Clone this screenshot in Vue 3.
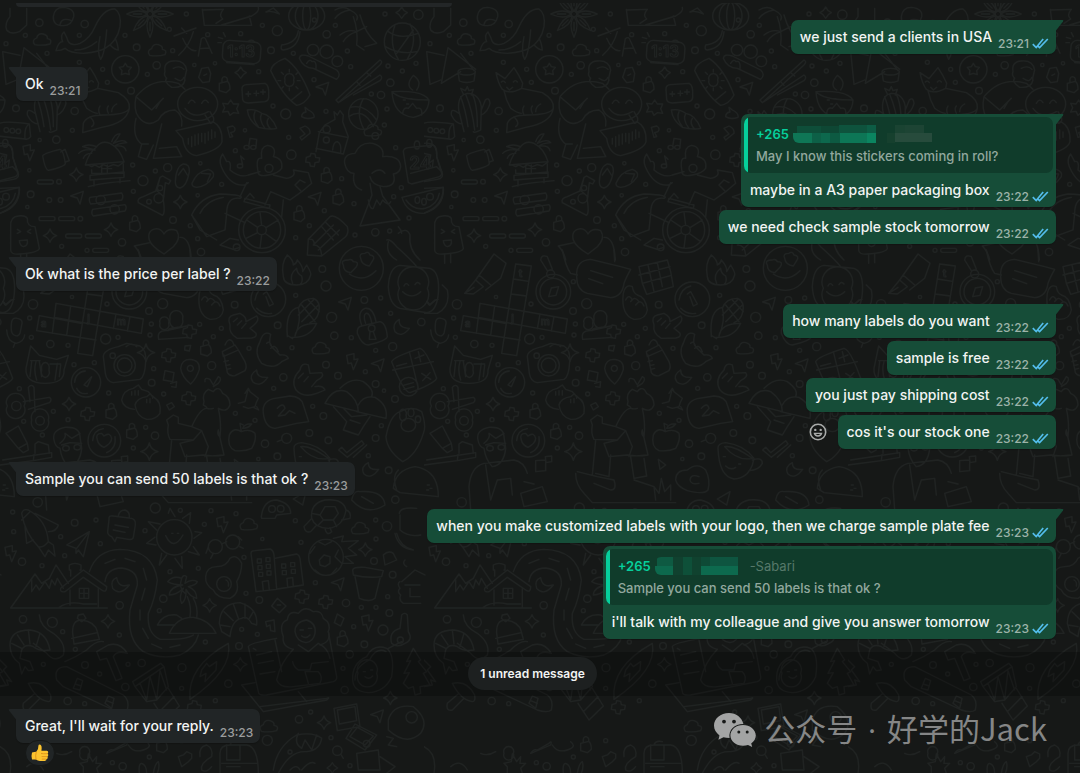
<script setup>
const groups = [
  {
    side: 'out',
    messages: [{ text: 'we just send a clients in USA', time: '23:21' }]
  },
  { side: 'in', messages: [{ text: 'Ok', time: '23:21' }] },
  {
    side: 'out',
    messages: [
      {
        text: 'maybe in a A3 paper packaging box',
        time: '23:22',
        quote: { phone: '+265', text: 'May I know this stickers coming in roll?' }
      },
      { text: 'we need check sample stock tomorrow', time: '23:22' }
    ]
  },
  { side: 'in', messages: [{ text: 'Ok what is the price per label ?', time: '23:22' }] },
  {
    side: 'out',
    messages: [
      { text: 'how many labels do you want', time: '23:22' },
      { text: 'sample is free', time: '23:22' },
      { text: 'you just pay shipping cost', time: '23:22' },
      { text: "cos it's our stock one", time: '23:22', hovered: true }
    ]
  },
  { side: 'in', messages: [{ text: 'Sample you can send 50 labels is that ok ?', time: '23:23' }] },
  {
    side: 'out',
    messages: [
      {
        text: 'when you make customized labels with your logo, then we charge sample plate fee',
        time: '23:23'
      },
      {
        text: "i'll talk with my colleague and give you answer tomorrow",
        time: '23:23',
        quote: { phone: '+265', name: '-Sabari', text: 'Sample you can send 50 labels is that ok ?' }
      }
    ]
  },
  { divider: '1 unread message' },
  { side: 'in', messages: [{ text: "Great, I'll wait for your reply.", time: '23:23', reaction: true }] }
]

// Censor mosaics: x, y, width, height, fill
const mosaicPhone = [
  [0, 8, 19, 10, '#0f7656'], [19, 8, 9, 10, '#0d6047'], [28, 8, 9, 10, '#0d684d'],
  [37, 8, 10, 10, '#0d5a42'], [47, 8, 27, 10, '#0d7656'], [74, 8, 9, 10, '#0b8560'],
  [4, 1, 24, 7, '#0e4e39'], [28, 1, 18, 7, '#0e4734'], [46, 0, 28, 8, '#0e533d'], [74, 0, 9, 8, '#0d5d45']
]
const mosaicName = [
  [94, 8, 8, 10, '#16402e'], [102, 8, 37, 9, '#274b3c'], [102, 0, 10, 8, '#1a4332'], [112, 0, 19, 8, '#1d4434']
]
const mosaicPhoneB = [
  [2, 0, 16, 9, '#0e5a42'], [0, 9, 18, 9, '#0d694d'], [18, 0, 10, 18, '#10412f'], [28, 0, 9, 18, '#0e5039'],
  [37, 0, 9, 18, '#10422f'], [46, 0, 9, 9, '#0e4a36'], [46, 9, 37, 9, '#0d6a4e'], [55, 0, 28, 9, '#0e5540']
]

// Wallpaper doodles, in units of a third of a pixel
const dots = [
  [118, 68, 11], [254, 72, 11], [76, 106, 6], [238, 106, 6], [18, 131, 6], [141, 160, 6], [375, 106, 6], [410, 142, 10],
  [518, 152, 6], [559, 42, 6], [508, 88, 6], [238, 187, 6], [308, 208, 6], [322, 247, 6], [393, 272, 10], [442, 223, 6],
  [470, 196, 11], [583, 195, 5], [645, 190, 5], [623, 104, 6], [722, 101, 6], [787, 76, 6], [832, 92, 15], [813, 151, 10],
  [880, 160, 6], [776, 215, 6], [819, 318, 6], [857, 342, 15], [942, 239, 6], [980, 103, 11], [1006, 76, 6], [943, 60, 6],
  [1042, 153, 6], [1052, 200, 6], [978, 334, 6], [980, 388, 11], [48, 325, 10], [224, 333, 11], [217, 391, 6], [169, 419, 11],
  [119, 420, 5], [88, 511, 5], [92, 583, 10], [82, 621, 5], [398, 495, 6], [503, 503, 12], [466, 513, 6], [601, 490, 5],
  [429, 542, 15], [400, 574, 6], [519, 660, 10], [571, 677, 6], [593, 716, 6], [603, 756, 11], [665, 553, 6], [593, 586, 5],
  [706, 452, 6], [735, 391, 5], [866, 412, 6], [874, 464, 14], [928, 677, 6], [887, 713, 6], [973, 632, 6], [1065, 705, 6],
  [1025, 536, 6], [1062, 611, 6], [185, 739, 6], [366, 727, 11], [261, 751, 6], [1155, 42, 6], [1255, 44, 14], [1164, 198, 6],
  [1207, 213, 6], [1171, 248, 11], [1114, 282, 6], [1143, 285, 11], [1161, 327, 6], [1153, 375, 6], [1126, 408, 10],
  [1187, 443, 6], [1204, 563, 6], [1181, 590, 6], [1227, 654, 6], [1126, 697, 11], [1169, 693, 6], [1248, 190, 6],
  [148, 600, 7], [182, 600, 7], [177, 545, 7], [241, 656, 7], [448, 845, 6], [99, 913, 14], [216, 891, 5], [321, 912, 6],
  [488, 911, 15], [447, 933, 10], [89, 954, 6], [454, 972, 6], [450, 1005, 6], [94, 1012, 6], [151, 1032, 11], [204, 1036, 6],
  [317, 1017, 15], [354, 1012, 6], [599, 973, 6], [664, 985, 6], [640, 1010, 6], [704, 914, 10], [747, 1045, 6], [635, 1097, 12],
  [833, 976, 10], [876, 1043, 6], [887, 886, 6], [967, 807, 10], [978, 858, 15], [995, 952, 15], [1003, 1007, 11], [1054, 1013, 6],
  [1093, 900, 10], [1142, 894, 6], [1172, 940, 6], [1264, 966, 11], [1127, 1051, 6], [1178, 1040, 12], [978, 1094, 10],
  [1014, 1127, 10], [1096, 1115, 6], [1127, 1152, 10], [1152, 1172, 5], [1185, 1197, 10], [222, 1094, 6], [283, 1088, 6],
  [461, 1106, 6], [455, 1148, 10], [58, 1166, 6], [326, 1179, 6], [491, 1182, 6], [160, 1234, 6], [71, 1264, 6], [204, 1259, 6],
  [127, 1305, 6], [437, 1282, 6], [465, 1307, 11], [400, 1344, 6], [821, 1165, 6], [850, 1132, 11], [706, 1240, 6], [765, 1261, 6],
  [938, 1219, 6], [970, 1248, 10], [928, 1299, 10], [985, 1321, 10], [795, 1331, 11], [832, 1369, 10], [775, 1377, 5],
  [1127, 1314, 10], [1105, 1367, 6], [1144, 1277, 6], [1166, 1411, 10], [1186, 1499, 11], [113, 1507, 14], [38, 1536, 6],
  [466, 1524, 15], [541, 1531, 6], [633, 1532, 6], [708, 1541, 6], [613, 1573, 6], [224, 1568, 10], [288, 1560, 6], [41, 1595, 6],
  [182, 1610, 6], [301, 1631, 6], [435, 1592, 6], [194, 1667, 6], [66, 1685, 11], [126, 1697, 6], [510, 1715, 6], [595, 1705, 6],
  [732, 1672, 6], [787, 1617, 5], [903, 1627, 6], [886, 1562, 6], [1127, 1560, 6], [1161, 1579, 14], [1128, 1617, 6],
  [1122, 1683, 10], [1178, 1724, 10], [946, 1748, 6], [738, 1780, 6], [778, 1800, 10], [490, 1796, 11], [478, 1832, 6],
  [359, 1816, 11], [358, 1905, 6], [69, 1858, 11], [157, 1867, 15], [188, 1895, 6], [725, 1888, 6], [772, 1903, 6], [616, 1926, 6],
  [717, 1938, 10], [1038, 1809, 11], [1084, 1822, 6], [1128, 1822, 6], [1168, 1839, 10], [1163, 1790, 6], [1061, 1880, 6],
  [1149, 1890, 15], [1093, 1933, 10], [1049, 1963, 11], [226, 1948, 6], [130, 1993, 6], [255, 1995, 10], [299, 2022, 6],
  [384, 1993, 6], [425, 1989, 11], [546, 2003, 12], [376, 2061, 11], [203, 2103, 11], [254, 2111, 6], [545, 2065, 6],
  [685, 2051, 11], [646, 2102, 6], [1029, 2005, 6], [1034, 2070, 11], [932, 2136, 6], [897, 2158, 11], [993, 2213, 6],
  [802, 2221, 15], [870, 2256, 6], [1050, 2297, 6], [1100, 2231, 10], [368, 2299, 11], [448, 2271, 6], [337, 2288, 6], [545, 2222, 6]
]
const sparkles = [
  [1205, 38, 17], [722, 218, 17], [229, 524, 20], [541, 606, 20], [150, 707, 20], [333, 689, 20], [438, 1058, 26],
  [207, 1212, 20], [448, 1355, 26], [1096, 1649, 20], [629, 1816, 20], [324, 1864, 20], [721, 1993, 20], [972, 2168, 20],
  [1171, 2094, 20], [997, 2304, 16]
]
const clouds = [[126, 120], [471, 152], [1118, 392], [962, 1046], [746, 1574], [1080, 1586], [806, 2180]]
const bolts = [[84, 457], [1055, 1084], [665, 1573], [30, 1660], [1100, 1868]]
const arrows = [[232, 592], [968, 265], [945, 595], [1036, 910], [1134, 1095], [1014, 1752], [1132, 2148]]
const crosses = [[937, 480], [505, 1066], [262, 1242], [976, 1806], [568, 995], [565, 1195], [905, 1790], [582, 2122]]
const locks = [[672, 258], [978, 530], [1013, 595], [616, 1048], [332, 1238], [394, 1298], [1026, 1920], [403, 675], [896, 645], [484, 2238]]
const dashes = [[112, 540, 48], [117, 650, 48], [176, 650, 48], [197, 702, 48], [256, 702, 48], [278, 745, 48]]

const doodles = [
  // sock, bun, whale
  'M30 25V50Q13 70 20 90Q33 105 58 95L80 75V25M160 50Q163 22 190 22Q225 25 221 50Q215 77 190 77Q158 77 160 50M180 74Q185 50 215 62',
  'M168 152Q175 125 188 125Q180 105 192 96Q200 110 205 125Q215 140 240 130Q270 115 285 80Q310 25 345 27Q365 40 360 80Q352 125 315 145Q300 155 250 160Q210 160 195 145Q185 152 168 152M300 110Q290 160 302 178Q315 160 320 90M330 135Q345 150 355 150Q352 125 345 115M225 150Q260 150 290 125',
  // boxes, characters, balls
  'M607 28L613 76H755L748 48M648 70L668 57Q655 45 670 28L607 30M665 75L755 48Q780 35 775 22',
  'M522 108L588 84M545 84L560 100M536 166Q570 135 580 95M548 115Q565 155 588 152M595 168L604 116Q614 108 618 120L636 160M600 146L628 144',
  'M798 36L820 24L838 42Q815 30 798 36M655 112L668 116M670 98L676 110M654 128H664',
  'M866 48a54 42 0 1 0 108 0a54 42 0 1 0 -108 0M886 48a34 42 0 1 0 68 0a34 42 0 1 0 -68 0M908 48a12 42 0 1 0 24 0a12 42 0 1 0 -24 0M895 92Q890 130 845 135Q840 150 850 150Q895 145 900 95',
  // tent, cup, cactus
  'M8 155L60 166M8 155L18 253L50 240M72 143L52 250L110 215M72 143L155 208M110 160L150 212M102 215a26 10 0 1 0 52 0a26 10 0 1 0 -52 0M102 215L106 243Q128 252 150 243L154 215',
  'M120 395L104 330Q100 285 130 280Q165 280 172 320L170 390Q150 400 148 395M110 290Q125 330 132 380M125 283Q145 330 152 390M145 283Q160 310 160 380M118 282L110 265L124 272L130 260L135 272L148 268L142 285M104 340Q80 320 82 345Q95 372 115 372M172 330L184 300Q196 290 198 310Q192 335 172 345',
  // fox
  'M216 218L243 236L270 203Q285 225 296 250L293 265L355 278Q392 300 388 325Q380 345 310 345Q260 345 250 370L248 398L305 382Q380 370 388 325M216 218Q222 250 235 268Q255 285 293 265M240 272L248 300L260 325Q280 340 292 340M232 246Q238 240 244 248M268 246Q274 238 280 246M248 262L256 270L266 262M300 345Q292 330 300 318M325 340Q318 325 325 318M335 335Q335 320 350 312M270 350Q290 370 275 380',
  // hugging figure, smiley, voice bubble
  'M408 290Q460 228 535 250L555 268M408 290L455 330L490 295M408 290Q400 330 415 350Q440 385 475 360Q490 330 525 330Q550 345 545 378M408 355Q395 410 425 432H445M425 433L415 470L440 478L460 435M485 372L460 475L545 470L530 440L478 445M495 215Q490 185 520 183Q555 180 560 210Q552 240 555 240Q550 265 515 262Q490 245 500 235Q490 225 495 215M520 205Q540 195 552 208M525 235Q545 250 552 232M468 325L480 305',
  'M533 312a60 50 0 1 0 120 0a60 50 0 1 0 -120 0M565 310Q575 292 585 308M605 310Q615 292 625 308M555 325Q580 360 625 335M615 345L632 370Q645 365 640 352L630 335',
  'M528 392L640 366Q668 380 666 425Q660 450 590 467Q555 462 548 415L528 392M565 415V432M575 410V440M585 405V436M595 402V432M605 400V425M615 400V430M625 396V420M635 390V416M645 396V412',
  // tag, password, star blob, shell, surfboard
  'M605 205L625 202L632 220L628 245L608 248L596 232ZM612 226L620 222',
  'M726 268Q725 255 740 254L795 250Q808 255 806 285Q808 302 795 305L745 309Q730 308 728 298ZM738 282H752M745 275V289M762 280H776M769 273V287M782 276H796M789 269V283',
  'M668 310L684 312L692 300L700 312L716 312L710 326L716 340L700 338L690 346L684 334L668 336L674 323Z',
  'M742 330Q765 325 785 340Q815 345 830 385Q810 390 775 382Q745 360 742 330M765 335Q755 355 775 380M785 340Q775 360 795 385M805 355Q795 370 812 387',
  'M812 212Q815 190 855 175Q900 205 930 285Q915 312 890 316Q850 290 812 212M855 240a14 14 0 1 0 26 0a14 14 0 1 0 -26 0M868 216V208M868 272V264M842 242H834M900 242H892M850 223L844 217M888 223L894 217M850 260L844 266M888 260L894 266M875 300L905 275',
  // crowd, chopsticks
  'M922 150a17 17 0 1 0 34 0a17 17 0 1 0 -34 0M960 155a20 20 0 1 0 40 0a20 20 0 1 0 -40 0M996 184a16 16 0 1 0 32 0a16 16 0 1 0 -32 0M898 175Q900 160 925 168L1010 210Q1025 225 1010 238L940 205Q910 205 898 175M920 190Q930 175 936 185Q950 180 948 205',
  'M1008 300L1140 180Q1150 185 1140 195L1015 308ZM1020 305L1140 225Q1150 232 1140 242L1060 285M1100 218L1112 228M1070 245L1080 256',
  // palm, globe
  'M1005 30Q1030 15 1050 30Q1020 35 1005 55M1050 30Q1080 45 1070 60M1060 50Q1075 90 1070 135L1092 150M1080 45Q1095 100 1130 130L1095 140M1020 105Q1045 85 1070 95Q1040 105 1030 125M1070 95L1100 80',
  'M1153 125a54 56 0 1 0 108 0a54 56 0 1 0 -108 0M1165 95Q1200 120 1255 100M1156 140Q1200 165 1250 155M1185 75Q1165 130 1195 178M1230 72Q1255 120 1222 178M1190 160L1240 90',
  // lamp, basketball, casserole
  'M1176 275Q1180 345 1240 352Q1285 345 1287 300Q1270 270 1176 275M1176 275Q1200 300 1285 300M1238 270Q1215 255 1240 226Q1268 245 1250 270M1208 340Q1210 320 1225 325L1238 310L1250 325Q1268 320 1265 345M1210 300H1216M1230 296H1236M1220 312H1226',
  'M1046 342a44 46 0 1 0 88 0a44 46 0 1 0 -88 0M1050 322Q1095 310 1130 360M1046 350Q1090 320 1120 380M1090 296Q1065 340 1092 388',
  'M-8 375Q0 360 88 372L92 410Q85 420 75 417L-8 408ZM88 372Q72 380 75 417M12 390a7 7 0 1 0 14 0a7 7 0 1 0 -14 0M30 392a7 7 0 1 0 14 0a7 7 0 1 0 -14 0M48 394a7 7 0 1 0 14 0a7 7 0 1 0 -14 0M915 322L925 330Q945 340 942 352Q920 360 905 350Q905 338 918 336Z',
  // castle, P, heart notes
  'M948 455L958 398L975 375L1005 358L1002 335L1012 345L1020 332L1030 345L1028 365L1045 410L1030 462L948 445M955 395L1042 412M998 450Q1000 425 1012 425Q1025 430 1022 458M970 420a9 9 0 1 0 18 0a9 9 0 1 0 -18 0',
  'M682 382L698 378Q710 385 702 395L692 398L698 410L690 412ZM900 385L915 378Q932 385 930 400L905 420L900 412L915 402Z',
  // camera, hut
  'M128 468Q130 460 180 448Q190 450 196 490Q195 500 145 511Q135 508 128 468M182 456L195 448L208 482L196 486',
  'M256 495Q265 460 290 440Q305 420 330 430Q360 445 372 485ZM264 495L275 500L285 495L298 502L310 494L325 500L340 494L355 498L372 486M275 510V520H370V492M270 526L372 516V532L270 540ZM282 540V558M360 535V548M265 560Q300 550 390 542M305 495V518M322 495V518M305 506H335M335 425Q345 400 360 402Q350 420 340 430Q370 415 380 428Q355 430 345 438Q375 435 378 452M290 440Q265 430 248 440L285 450M280 450Q250 445 236 460M275 460Q255 460 250 475M0 430Q40 425 38 470L55 520Q58 535 40 538L0 545M0 460L20 465L15 490L28 480L25 500M0 565L58 562Q62 620 0 640M8 590a8 8 0 1 0 20 0a8 8 0 1 0 -20 0',
  // sliders, flask
  'M270 592Q265 600 272 612L365 600Q372 590 365 579ZM288 600a14 14 0 1 0 28 0a14 14 0 1 0 -28 0M278 628Q272 640 280 648L375 633Q382 622 375 614ZM330 628a14 14 0 1 0 28 0a14 14 0 1 0 -28 0',
  'M480 532L488 528L512 542L506 552L496 548L490 600Q496 640 488 646L415 608Q410 595 430 590L470 572ZM480 532L468 570L492 590M462 595a14 14 0 1 0 28 0a14 14 0 1 0 -28 0M472 564a8 8 0 1 0 16 0a8 8 0 1 0 -16 0M440 605a7 7 0 1 0 14 0a7 7 0 1 0 -14 0',
  // flip-flops, notes
  'M526 545Q528 500 550 492Q570 492 568 515Q560 560 540 564Q526 562 526 545M535 525L550 505L562 525M576 550Q590 515 625 508Q645 515 640 530Q620 560 590 562Q575 560 576 550M605 520L632 522L622 545',
  'M732 442a8 6 0 1 0 16 0a8 6 0 1 0 -16 0M752 442a8 6 0 1 0 16 0a8 6 0 1 0 -16 0M746 440L750 415L770 418L768 440M712 498a8 6 0 1 0 16 0a8 6 0 1 0 -16 0M728 495L722 468L732 478',
  // wheelchair
  'M716 690a70 68 0 1 0 140 0a70 68 0 1 0 -140 0M730 690a56 55 0 1 0 112 0a56 55 0 1 0 -112 0M771 690a14 14 0 1 0 28 0a14 14 0 1 0 -28 0M785 676L780 636M798 683L835 660M795 700L830 725M785 704L780 744M773 698L738 715M773 682L740 660',
  'M664 500Q655 480 668 462L680 485Q695 480 690 510Q720 535 745 525L780 515M664 500Q690 560 735 555L745 548M720 590L740 548M775 520Q765 470 785 475Q780 440 802 436Q832 440 820 470Q850 475 845 505Q835 520 805 525Q780 530 775 520M795 505a12 12 0 1 0 24 0a12 12 0 1 0 -24 0M820 525L860 535Q890 530 880 510L925 518L935 550L905 575L870 600L812 575L795 615M905 575L885 555L900 540L915 548M735 595L810 615L808 625L732 605ZM850 600L845 650',
  'M575 645Q600 590 660 582Q740 585 720 595Q680 590 680 640L675 690L620 710ZM600 640Q620 600 670 592M575 645L600 690L650 720M660 735L690 715L715 720M660 735L700 748L720 742M700 742a10 10 0 1 0 20 0a10 10 0 1 0 -20 0M735 598L750 580L762 594M675 640L735 668',
  // tree cloud, calendar, melon, volcano
  'M1034 490Q1030 462 1065 460Q1080 425 1118 430Q1155 440 1148 470Q1200 465 1202 500Q1200 520 1180 522Q1192 560 1150 560Q1115 555 1110 530M1034 490Q1040 520 1062 520Q1055 560 1085 570M1116 520Q1140 500 1155 520M1110 550L1116 585L1080 678L1200 660L1148 588L1140 560M1105 600Q1110 630 1120 625L1130 600L1140 615L1148 600Q1165 620 1172 605',
  'M1210 455Q1210 445 1225 443L1300 435Q1312 440 1310 470L1325 520Q1325 530 1310 532L1235 552L1225 548ZM1232 520L1310 500L1325 515M1243 435a8 12 0 1 0 16 0a8 12 0 1 0 -16 0M1280 430a8 12 0 1 0 16 0a8 12 0 1 0 -16 0',
  'M1206 592L1330 562Q1330 620 1270 640Q1220 640 1206 592M1218 600Q1240 632 1275 625Q1312 615 1318 580M1245 600a7 10 0 1 0 14 0a7 10 0 1 0 -14 0M1265 605a7 10 0 1 0 14 0a7 10 0 1 0 -14 0',
  // popsicle
  'M32 680Q30 650 55 648Q75 645 82 655Q80 680 105 680L118 745Q115 758 60 762Q32 765 32 750ZM52 688L62 695L52 700M92 688L82 695L92 700M58 722L82 720Q85 738 70 740Q60 738 58 722M62 762V790M80 760V788',
  // chillies, pencil, heart bubble
  'M1160 720Q1170 715 1190 740Q1235 780 1250 800M1165 725Q1155 760 1190 780M1195 700Q1220 680 1230 705Q1225 750 1260 780M1195 680Q1205 690 1205 700',
  'M922 765L925 718L990 650Q1005 640 1042 680Q1048 700 1035 712L965 768ZM925 718Q945 715 942 735Q962 735 965 765M965 680L1000 720M975 665L1015 705M940 735L1000 675M955 750L1018 690',
  'M403 738L450 728M403 738Q420 755 425 780M448 720Q440 690 470 686Q485 688 492 702Q505 682 530 692Q545 715 520 740L492 762Q455 740 448 720M540 712Q570 710 574 780',
  // crossword
  'M168 910L430 957L424 1000L163 952M118 947L243 970M110 992L288 1020M118 947L110 992M168 910L157 1000M212 918L200 1006M300 934L292 978M348 942L340 986M390 950L382 993M275 792L233 1060L278 1067L322 798ZM268 837L314 844M261 882L307 888',
  // pen, compass
  'M122 880L155 840L178 860L148 882L122 880M155 840L210 762L246 790L230 835L185 870M165 825L200 855M122 880L150 862',
  'M336 875a52 52 0 1 0 104 0a52 52 0 1 0 -104 0M348 875a40 40 0 1 0 80 0a40 40 0 1 0 -80 0M374 890L382 864L404 860L396 886ZM368 822a12 12 0 1 0 24 0a12 12 0 1 0 -24 0M370 812L350 780Q352 762 370 770L385 808',
  // speech bubble, gift, flame
  'M458 830Q455 780 500 778L590 800L620 808Q605 835 600 850Q595 890 560 893L490 880Q458 870 458 830M500 812L566 832M494 836L536 851M415 750Q425 800 440 820L460 825M570 750L572 785',
  'M645 800L730 780L740 815L748 860L668 883L655 850ZM645 825L738 800M672 795L690 875M700 788L715 860M655 850L742 826',
  'M850 830Q842 790 862 765Q880 780 880 795Q890 790 892 780Q910 800 908 815L920 795Q935 820 932 825Q925 855 890 855Q852 855 850 830M878 850Q865 825 890 805Q890 820 905 828Q910 845 900 854',
  // heart-eyes face, sticker face
  'M1018 805a66 66 0 1 0 132 0a66 66 0 1 0 -132 0M1030 795Q1020 780 1045 780Q1055 775 1060 785Q1080 785 1068 802L1052 818Q1030 815 1030 795M1082 775Q1075 760 1095 760Q1105 752 1110 765Q1128 768 1118 782L1108 798Q1085 795 1082 775M1048 822Q1090 850 1128 812',
  'M1165 860Q1168 800 1200 796L1290 805Q1320 815 1315 880Q1310 935 1280 938L1200 925Q1168 915 1165 860M1198 865a46 46 0 1 0 84 0a46 46 0 1 0 -84 0M1212 858Q1218 845 1226 856M1245 854Q1252 842 1260 852M1208 875Q1235 900 1262 875M1282 905L1290 915L1305 900',
  // hand, people, rock hand
  'M625 860Q605 850 598 880Q590 945 630 958Q665 960 670 930Q665 890 640 885M625 860Q628 880 640 885M605 900Q615 880 625 900M620 905Q632 885 645 905M635 915Q650 895 660 918',
  'M510 958a20 20 0 1 0 38 0a20 20 0 1 0 -38 0M480 970a14 14 0 1 0 26 0a14 14 0 1 0 -26 0M476 1018Q470 990 500 992L560 978M476 1018L565 1012M505 992Q500 985 545 980',
  'M690 975Q680 950 700 945L720 940Q740 950 738 965L770 948Q780 960 762 975L750 985L768 1000Q772 1012 755 1014L712 1015Q685 1000 690 975M700 965L712 955M712 975L725 962M725 985L738 970',
  'M812 1003Q790 990 780 1025Q760 1060 785 1090Q820 1110 845 1085L865 1075Q860 1062 840 1065M812 1003Q805 1030 815 1040L840 1065M800 1030Q810 1020 815 1040M812 1045Q825 1030 835 1055',
  'M925 1095Q905 1085 900 1110Q870 1140 888 1170Q910 1195 950 1180L975 1170Q968 1155 945 1160M925 1095L930 1120L965 1118Q975 1130 950 1142L935 1160M895 1135L910 1120M912 1145L925 1130',
  // clock, corn, padlock, moons
  'M753 898a52 52 0 1 0 104 0a52 52 0 1 0 -104 0M765 900Q770 865 800 858M770 925Q790 945 815 940M790 882L800 875L820 912L808 918L798 890',
  'M862 1010Q855 930 895 922Q905 960 885 1008M885 1008Q890 970 950 970Q930 1015 875 1012M865 1008L878 1016M895 925Q905 895 940 895Q965 905 955 940Q950 960 930 968M905 915L945 965M925 900L958 935M895 945L940 900M905 965L955 915',
  'M1072 1000Q1070 980 1085 978L1140 965Q1158 968 1162 1010Q1160 1022 1105 1035Q1085 1035 1072 1000M1085 975Q1070 935 1095 925Q1120 922 1128 965M1097 970Q1088 945 1098 940Q1110 938 1115 968M1105 985a10 10 0 1 0 20 0a10 10 0 1 0 -20 0M1110 995L1108 1018H1128L1120 995',
  'M1198 958Q1175 970 1185 995Q1205 1015 1228 985Q1195 985 1198 958M770 1110Q745 1125 758 1145Q780 1165 803 1132Q770 1135 770 1110M1105 1388Q1080 1400 1092 1422Q1112 1440 1136 1408Q1105 1412 1105 1388',
  // microphone
  'M35 965Q38 952 52 955Q68 958 66 970L60 1000Q55 1012 42 1005Q30 1000 35 965M20 990Q22 1025 48 1030Q72 1025 74 1005M45 1028L40 1042M55 855L70 870Q80 920 40 940H0M8 905L16 915L35 900L42 898',
  // cat, timer, photo camera
  'M92 1038L118 1066L170 1078L205 1066L192 1110Q195 1150 135 1150Q75 1150 78 1105ZM95 1085L90 1130M108 1085Q100 1110 110 1140M118 1085L125 1130M172 1090L165 1140M182 1095L178 1130M92 1082H120M150 1092H182M125 1110a12 16 0 1 0 22 0a12 16 0 1 0 -22 0',
  'M214 1147a44 44 0 1 0 88 0a44 44 0 1 0 -88 0M224 1147a34 34 0 0 1 32 -34M230 1165Q240 1185 262 1180M252 1155L275 1130L262 1160Z',
  'M310 1070Q310 1050 355 1040L380 1030L420 1038Q440 1050 437 1085Q435 1130 420 1138L340 1148Q320 1145 316 1120ZM342 1096a32 32 0 1 0 64 0a32 32 0 1 0 -64 0M352 1096a22 22 0 1 0 44 0a22 22 0 1 0 -44 0M330 1067a8 8 0 1 0 16 0a8 8 0 1 0 -16 0M378 1040Q395 1025 410 1040',
  // map pin, squares, bottle
  'M542 1105Q545 1078 570 1078Q600 1080 598 1108Q590 1135 572 1152Q545 1130 542 1105M562 1105a9 9 0 1 0 18 0a9 9 0 1 0 -18 0M555 1038L572 1036L568 1053L554 1050ZM495 1112L522 1118L518 1145L490 1140ZM512 1150L530 1145L528 1162L515 1160M500 1215L515 1208L523 1220L508 1230Z',
  'M667 1055L705 1035L715 1050L670 1070ZM672 1065L682 1118Q690 1130 705 1127L735 1112Q742 1100 735 1085L715 1050M675 1035Q685 1010 698 1025L702 1035M672 1085L685 1082M677 1097L690 1094M680 1108L692 1105',
  // scissors, dumplings, pin
  'M22 1218a28 26 0 1 0 50 0a28 26 0 1 0 -50 0M35 1218a14 14 0 1 0 28 0a14 14 0 1 0 -28 0M95 1260a26 26 0 1 0 50 0a26 26 0 1 0 -50 0M107 1262a13 13 0 1 0 26 0a13 13 0 1 0 -26 0M70 1205L148 1192Q158 1198 148 1208L85 1228M90 1205L85 1162Q95 1150 102 1162L105 1235',
  'M365 1200Q370 1170 400 1165L415 1155L425 1168L445 1175Q460 1190 458 1195M365 1200Q370 1225 403 1228M405 1215Q410 1195 440 1190L450 1182L462 1192Q485 1205 480 1240Q465 1260 440 1258Q410 1250 405 1215M395 1175V1185M405 1172V1185M415 1172V1185M440 1198V1208M450 1196V1208',
  'M715 1210L735 1205L745 1165L750 1175L775 1195L768 1210L765 1220L745 1225L730 1220M745 1165L735 1180M760 1222L776 1230L770 1220',
  // hiker
  'M612 1205Q605 1180 625 1168L640 1175Q650 1160 662 1170L668 1180Q690 1190 690 1215Q680 1240 655 1225M612 1205L610 1215L618 1220Q620 1230 640 1225M615 1145Q612 1130 630 1138L640 1155L655 1130Q668 1135 655 1150L640 1160M620 1225Q600 1225 575 1280L605 1292L580 1320L510 1318Q500 1300 505 1275L500 1260L520 1245L535 1252L535 1270L575 1280M655 1225Q665 1270 660 1310Q650 1305 655 1290M605 1292L625 1340L615 1370M655 1292L672 1365Q635 1370 610 1365L555 1370L540 1330L580 1320M515 1320L505 1425M560 1365L555 1430L515 1420M620 1370L630 1435L668 1428L660 1375M455 1420Q455 1455 480 1480L505 1508H755M460 1415L520 1430L570 1440Q580 1470 560 1470L510 1450M630 1440L690 1460L695 1500M695 1500L690 1460L705 1480L712 1435L722 1475L740 1455V1500',
  // apple, speech bubble with squiggle, parasols
  'M724 1295Q700 1280 688 1305Q680 1340 705 1352Q735 1355 755 1345Q770 1320 765 1300Q750 1285 724 1295M724 1295L720 1270L730 1275M728 1285Q735 1270 755 1272Q745 1285 728 1285',
  'M790 1240Q785 1205 820 1196L870 1188Q905 1190 910 1215L926 1265L890 1270L825 1285Q795 1282 790 1240M832 1225Q850 1205 855 1225L835 1248L855 1245L868 1232L885 1240',
  'M975 1210Q1000 1160 1040 1175Q1075 1200 1075 1235ZM1020 1165Q1055 1130 1090 1145Q1125 1170 1115 1190M1075 1215Q1090 1185 1125 1192Q1165 1215 1158 1255L1070 1235M1000 1220L1040 1265L1030 1290L1075 1305L1090 1280L1110 1250M1030 1225L1055 1250L1100 1245M1050 1260L1080 1270',
  // calculator, paw hand
  'M1175 1085Q1180 1070 1260 1045Q1280 1050 1310 1135Q1305 1150 1230 1178Q1210 1175 1175 1085M1228 1055L1255 1165M1178 1110L1300 1085M1190 1098L1220 1090M1245 1075L1272 1065M1255 1055L1262 1085M1265 1120L1292 1138M1290 1118L1268 1142M1198 1160a28 28 0 1 0 56 0a28 28 0 1 0 -56 0M1210 1156L1240 1148M1212 1168L1242 1160',
  'M1158 1310Q1170 1245 1200 1235Q1235 1215 1265 1235Q1280 1280 1270 1300Q1250 1365 1208 1385Q1160 1350 1158 1310M1203 1275a22 20 0 1 0 44 0a22 20 0 1 0 -44 0M1200 1245a10 12 0 1 0 18 0a10 12 0 1 0 -18 0M1224 1238a9 12 0 1 0 18 0a9 12 0 1 0 -18 0M1246 1258a8 10 0 1 0 16 0a8 10 0 1 0 -16 0',
  // tube, cake, reader, heart coin
  'M18 1300L55 1278L82 1330L85 1350L70 1358L55 1345ZM55 1345L82 1330M8 1380L155 1358V1372L100 1382L102 1365M105 1360V1332L115 1325L145 1335L148 1360M0 1395L100 1382',
  'M162 1320Q155 1290 195 1282Q240 1280 240 1310L245 1345Q240 1395 205 1400Q185 1380 180 1345Q165 1340 162 1320M180 1330Q200 1315 195 1300L215 1315L240 1300M185 1335L210 1328L245 1330M188 1345a10 8 0 1 0 20 0a10 8 0 1 0 -20 0M222 1342a10 8 0 1 0 20 0a10 8 0 1 0 -20 0M135 1460Q140 1400 180 1390L270 1380Q300 1385 310 1420M135 1460L140 1530M185 1395L200 1500L220 1440L260 1435L265 1485M290 1480L355 1460L370 1505L300 1520ZM300 1445L330 1452',
  'M264 1322a49 49 0 1 0 98 0a49 49 0 1 0 -98 0M292 1320Q285 1300 305 1300L312 1308Q330 1295 335 1315Q335 1330 312 1342Q295 1335 292 1320M278 1322Q280 1290 310 1286M345 1310Q350 1345 320 1358M335 1382L365 1380V1412L335 1415ZM364 1370L383 1368V1385L366 1388Z',
  // cup, magnifier, cloud refresh, ticks
  'M882 1345Q880 1330 905 1328Q960 1335 990 1375L985 1395Q970 1435 930 1437Q885 1430 882 1345M902 1340Q930 1335 985 1375Q940 1385 902 1340M985 1380Q1015 1370 1015 1390Q1005 1410 975 1412M898 1370H904M944 1392H950M905 1398Q920 1412 935 1402',
  'M845 1315a15 15 0 1 0 30 0a15 15 0 1 0 -30 0M845 1320L832 1325M1016 1350L1025 1342L1040 1358L1085 1322L1092 1332L1042 1372ZM1060 1372L1100 1335M703 1378L725 1395L708 1408ZM755 1440Q755 1410 790 1410Q820 1385 845 1410Q860 1440 852 1470Q840 1485 790 1472Q760 1460 755 1440M825 1430Q800 1420 798 1440Q800 1455 825 1450M880 1497L918 1475L908 1515Z',
  // taco, ball, ghost
  'M1180 1465Q1185 1410 1245 1400Q1315 1410 1315 1490L1200 1478ZM1195 1410Q1175 1430 1190 1470M1282 1455H1288M1290 1465H1296M1280 1470H1286M1080 1475Q1060 1470 1055 1500Q1100 1550 1155 1515Q1150 1470 1080 1475M1085 1490L1120 1510M784 1550Q790 1500 830 1500Q872 1510 872 1540L830 1545L825 1555H785ZM806 1527a10 10 0 1 0 20 0a10 10 0 1 0 -20 0M832 1526a10 10 0 1 0 20 0a10 10 0 1 0 -20 0',
  // rocket, plane, luggage, sun
  'M65 1540Q70 1525 85 1530Q140 1560 145 1625Q130 1645 115 1640Q75 1600 65 1540M105 1540L175 1575Q170 1595 145 1595M75 1580L80 1630L100 1620M115 1640L135 1670L145 1650L165 1668L160 1635L145 1625M65 1560Q80 1545 90 1535M200 1635L268 1595L250 1670L235 1650L228 1660V1645ZM268 1595L230 1645',
  'M327 1558Q325 1545 340 1548L395 1555Q408 1558 406 1575L400 1612Q398 1620 385 1618L350 1612L345 1625L335 1610Q322 1605 323 1595ZM355 1548Q358 1530 375 1530Q390 1535 388 1552M345 1575L385 1582M340 1590L375 1597',
  'M470 1612a53 53 0 1 0 106 0a53 53 0 1 0 -106 0M505 1540L510 1525L525 1550M548 1555L572 1538L568 1570M585 1595L605 1598L582 1615M580 1640L598 1665L565 1655M545 1670L547 1705L525 1675M500 1665L478 1695L485 1660M468 1635L440 1630L465 1612M470 1590L445 1565L480 1572M497 1607Q520 1655 549 1605M515 1600H519M532 1600H536',
  // sunglasses, turtle, soccer ball
  'M625 1640a21 21 0 1 0 42 0a21 21 0 1 0 -42 0M677 1626a21 21 0 1 0 42 0a21 21 0 1 0 -42 0M665 1632L680 1625M625 1640L618 1660M640 1660L632 1675M715 1610L725 1620M719 1640L730 1645',
  'M935 1555Q930 1510 975 1500Q1030 1495 1038 1530Q1030 1580 985 1585Q945 1585 935 1555M960 1545L975 1520L1005 1520L1015 1540L1000 1560L970 1560ZM935 1555L912 1580Q915 1600 932 1595L950 1575M1038 1530Q1055 1535 1050 1555L1025 1560M975 1585Q980 1610 995 1595L990 1583M970 1560L955 1575M1000 1560L1010 1580M960 1545L935 1540',
  'M926 1672a52 54 0 1 0 104 0a52 54 0 1 0 -104 0M958 1680L972 1665L990 1670L990 1690L975 1700L960 1695ZM955 1625L975 1635L995 1625M930 1660L945 1640M1015 1650L1005 1670L1025 1690M945 1710L960 1722M995 1722L1010 1705M1000 1615L1030 1608L1025 1625L1075 1622L1045 1645L1070 1665L1035 1670L1060 1690H1028',
  // fried egg, buildings
  'M617 1730Q620 1700 650 1700Q680 1700 690 1675Q710 1660 725 1690Q725 1720 710 1745Q720 1780 690 1795Q650 1795 640 1770Q615 1755 617 1730M650 1752a22 22 0 1 0 44 0a22 22 0 1 0 -44 0M678 1740Q688 1745 685 1758',
  'M753 1660Q753 1652 765 1652L810 1647Q820 1650 822 1665L830 1768L768 1775ZM824 1675L890 1662Q898 1665 900 1675L910 1755L832 1767M790 1772L787 1745L805 1742L808 1770M863 1762L861 1735L878 1733L880 1760M772 1677H784V1689H772ZM798 1673H810V1685H798ZM774 1697H786V1709H774ZM799 1693H811V1705H799ZM776 1717H788V1729H776ZM801 1713H813V1725H801ZM845 1692H857V1704H845ZM872 1688H884V1700H872ZM847 1712H859V1724H847ZM874 1708H886V1720H874Z',
  // road, mountains, house
  'M268 1715Q290 1650 360 1648Q460 1650 472 1740Q465 1800 445 1840Q440 1900 480 1918Q560 1920 580 1905M315 1745Q320 1705 365 1704Q415 1710 412 1755L390 1830Q380 1920 430 1955Q480 1980 540 1965Q585 1945 595 1905M315 1690L345 1678M375 1675L405 1685M430 1705L440 1740M435 1765L425 1800M420 1830V1860M428 1885L445 1915M455 1932L485 1945M510 1942L540 1935M350 1733Q330 1740 338 1765Q360 1790 388 1755Q355 1765 350 1733',
  'M32 1824L105 1722L125 1750L148 1735L168 1695L205 1750M32 1824H322M95 1740V1775L108 1755L118 1770L135 1745L148 1765L155 1740L165 1755L172 1735L190 1765M182 1765L250 1710L320 1760Q320 1780 305 1770L250 1732L195 1775Q178 1778 182 1765M212 1728V1710H208V1695Q225 1685 243 1695V1710H240M210 1770V1815M295 1765V1822M238 1765H266V1795H238ZM252 1765V1795M238 1780H266M178 1822Q205 1802 250 1812H290',
  // palm island, croissant, dice
  'M555 1780Q535 1765 545 1735Q520 1725 503 1745Q520 1755 548 1755Q510 1760 508 1785Q530 1785 550 1765Q535 1790 545 1810Q560 1800 558 1768Q570 1790 590 1795Q590 1770 565 1760Q590 1755 592 1745Q575 1735 555 1750L560 1730Q550 1722 545 1735M562 1790Q575 1820 570 1850M580 1795Q595 1820 590 1855M508 1900Q530 1850 580 1852Q630 1860 648 1900ZM472 1875Q490 1840 530 1845L545 1855M472 1875H525',
  'M658 1870Q660 1810 720 1808Q775 1825 770 1875L755 1870Q740 1845 725 1855Q695 1860 690 1910L665 1895ZM672 1835L700 1862M700 1812L715 1855M735 1812L735 1855M760 1835L748 1855M660 1875L690 1880M815 1818L832 1795L858 1818L838 1838ZM832 1815H842M1003 1868L1012 1842L1032 1855L1022 1878ZM797 1865L822 1860L825 1895L812 1892L810 1875L800 1880Z',
  // flower pot, cocktail, log cabin
  'M1058 1710Q1060 1700 1095 1702L1150 1712L1145 1730Q1100 1735 1060 1725ZM1065 1730L1078 1795Q1110 1808 1125 1795L1140 1735M1150 1665Q1165 1650 1180 1660L1190 1680L1155 1695ZM1198 1540Q1200 1520 1250 1525M1200 1545V1590Q1225 1612 1262 1605M1185 1600Q1195 1645 1240 1650Q1200 1640 1190 1600M1200 1745Q1190 1750 1200 1765Q1190 1775 1202 1785Q1195 1800 1210 1810H1262M1205 1745L1245 1710L1275 1725M1215 1755H1260M1230 1765V1790H1260M1215 1680Q1205 1690 1220 1700',
  // shrimp, beanie, snake, trees
  'M30 1935Q30 1890 90 1890Q140 1895 150 1950Q120 1955 100 1940Q75 1930 65 1950L60 1975L90 1985L100 2010L85 2012L75 2000L65 2022L58 1990Q30 1970 30 1935M52 1905L72 1935M85 1890L90 1932M120 1900L108 1940M35 1930L65 1945M118 1845Q120 1880 160 1900Q200 1930 190 1965Q165 1990 140 1960L100 1930',
  'M218 1900Q215 1860 245 1860Q285 1865 292 1895L298 1918L222 1932ZM215 1915L292 1898M232 1855L235 1845L250 1842L258 1855L245 1865ZM0 1980L20 2000L10 2010L35 2045L20 2040L25 2055L0 2060M85 2050Q130 2040 152 2085Q155 2105 145 2105Q110 2100 85 2050M105 2080L70 2110Q65 2135 85 2130L120 2095',
  // skateboard, hammer, drum
  'M170 2040Q160 2000 200 2000L250 2025L370 2085Q390 2100 382 2130Q370 2140 340 2130L190 2060ZM220 2065L232 2035L248 2042L240 2070ZM315 2110L325 2088L342 2095L335 2125ZM225 2052L244 2058M320 2102L340 2110M195 1985Q230 1970 260 1950Q290 1920 310 1925',
  'M290 1955L325 1935Q360 1925 382 1960Q350 1950 340 1970L366 2035L348 2042L320 1975L300 1980ZM398 2045L482 1990L492 2000L405 2060ZM405 2060L440 2105L470 2100L505 2060L492 2000M420 2050L440 2100L450 2030L470 2098L480 2012L500 2070M462 2110L495 2160L538 2118L505 2065M478 2135L522 2090M300 2090',
  // surf leaf, laptop woman
  'M570 2098Q560 2000 685 1930Q700 2010 570 2098M605 2010L620 1990L628 2000L650 1985L648 2010L615 2045L618 2020L600 2030Z',
  'M745 1940Q745 1930 830 1915M745 1940L775 2075Q775 2088 800 2085L1000 2045Q1012 2040 1010 2030L985 1895M825 1920L845 2015M725 2055L765 2048M725 2055L790 2135L980 2100Q992 2090 980 2095L780 2120M895 2075L920 2105M770 1965L815 1955M775 1990L820 1982M780 2022L825 2015M760 1945L768 1950',
  'M850 1910Q835 1870 862 1860Q865 1830 895 1840Q915 1815 940 1835Q965 1830 970 1855Q995 1870 985 1895Q995 1925 960 1935M850 1910Q845 1940 880 1948M885 1895Q885 1865 920 1860Q950 1870 945 1900Q940 1925 918 1928Q890 1925 885 1895M900 1890H910M925 1885H935M905 1908Q918 1918 930 1905M880 1948Q840 1990 830 2040Q840 2065 880 2060L960 2050Q970 2030 955 2015H915L925 2050M895 1935L925 1955L955 1930Q985 1945 990 1975M878 1985Q880 2000 895 2010L930 2010L935 1990L985 1985',
  // guitar, avocado, spruce
  'M1175 1930Q1165 1895 1200 1885L1205 1845Q1215 1835 1222 1845L1225 1895Q1240 1920 1215 1930Q1190 1945 1175 1930M1192 1920a9 9 0 1 0 18 0a9 9 0 1 0 -18 0',
  'M1058 2040Q1055 1990 1100 1970Q1120 1930 1160 1945Q1185 1965 1175 2030Q1155 2075 1105 2078Q1060 2075 1058 2040M1065 2040Q1065 2000 1108 1980Q1130 1940 1158 1955M1074 2020a30 30 0 1 0 56 0a30 30 0 1 0 -56 0M1090 2015H1096M1112 2010H1118M1095 2030Q1108 2040 1118 2028M1165 1945L1205 1925',
  'M1240 1945L1220 1985L1232 1982L1212 2020L1228 2018L1210 2050L1225 2065L1240 2060L1245 2085L1262 2080L1260 2060L1290 2055L1270 2020L1280 2015L1255 1985L1262 1980Z',
  // polaroids, fish rocket, banana
  'M1002 2125L1070 2112L1080 2180L1012 2192ZM1012 2130L1065 2120L1070 2162L1018 2172ZM1065 2172L1130 2205L1095 2250L1038 2215ZM1072 2182L1120 2208L1095 2235L1050 2210ZM1165 2160Q1180 2110 1240 2120Q1290 2160 1262 2200Q1220 2240 1165 2190ZM1218 2152a17 17 0 1 0 34 0a17 17 0 1 0 -34 0M1160 2210L1180 2215L1165 2235L1190 2240M1070 2260L1135 2250L1140 2310L1075 2310ZM1140 2270L1185 2300L1160 2320',
  'M820 2310Q830 2240 890 2205Q940 2195 965 2215Q960 2250 920 2255Q870 2250 835 2320M895 2200Q880 2230 905 2245L915 2220L935 2250L950 2205M870 2310Q890 2290 900 2310M905 2310Q930 2280 945 2290M998 2252a14 14 0 1 0 28 0a14 14 0 1 0 -28 0M1022 2262L1030 2275',
  // backpack, bunny, bear
  'M660 2260Q660 2235 690 2235H740Q775 2240 775 2320M660 2260V2320M680 2235V2280H720V2235M665 2290H770M690 2235Q695 2220 715 2225M680 2300H720M600 2270Q595 2240 620 2235Q640 2245 635 2270Q600 2290 605 2310Q620 2320 635 2300M535 2270L550 2265L560 2255L575 2262V2275L565 2285L545 2300Z',
  'M418 2320Q415 2290 425 2290Q440 2295 440 2320M460 2320Q465 2290 475 2285Q480 2300 472 2320M240 2290L262 2285L265 2262L278 2285L290 2270L288 2290L305 2290L290 2305L295 2320M250 2320V2300L240 2290M340 2250Q330 2245 320 2260L380 2235Q385 2220 375 2230ZM240 2260a15 15 0 1 0 28 0a15 15 0 1 0 -28 0M215 2255Q190 2270 170 2260M0 2240Q40 2260 30 2320M80 2300Q110 2275 130 2310M385 2235Q400 2260 430 2250Q460 2240 440 2225'
]
const petals = [0, 45, 90, 135, 180, 225, 270, 315]
</script>

<template>
  <main class="chat">
    <svg class="wallpaper" aria-hidden="true">
      <defs>
        <pattern id="doodles" width="424" height="800" patternUnits="userSpaceOnUse">
          <g v-for="shift in [0, -1272]" :key="shift" :transform="`scale(0.33333) translate(${shift} 0)`" class="ink">
            <circle v-for="(d, i) in dots" :key="'d' + i" :cx="d[0]" :cy="d[1]" :r="d[2]" />
            <path
              v-for="(s, i) in sparkles" :key="'s' + i"
              :d="`M${s[0]} ${s[1] - s[2]}q5 ${s[2] - 5} ${s[2]} ${s[2]}q${5 - s[2]} 5 ${-s[2]} ${s[2]}q-5 ${5 - s[2]} ${-s[2]} ${-s[2]}q${s[2] - 5} -5 ${s[2]} ${-s[2]}Z`"
            />
            <path v-for="(c, i) in clouds" :key="'c' + i" :d="`M${c[0] - 22} ${c[1] + 14}q-10 -14 6 -20q4 -16 20 -12q14 4 12 14q16 2 8 16q-22 6 -46 2Z`" />
            <path v-for="(b, i) in bolts" :key="'b' + i" :d="`M${b[0] - 15} ${b[1] - 18}l22 -5l0 18l12 -2l-14 32l-6 -20l-10 2Z`" />
            <path v-for="(a, i) in arrows" :key="'a' + i" :d="`M${a[0] - 20} ${a[1] - 4}l38 -14l-10 38l-8 -18Z`" />
            <path v-for="(x, i) in crosses" :key="'x' + i" :d="`M${x[0] - 18} ${x[1] - 8}l12 -4l2 -8l12 2l2 10l12 2l-2 12l-12 2l-2 12l-12 -2l-2 -10l-12 -2Z`" />
            <path v-for="(l, i) in locks" :key="'l' + i" :d="`M${l[0] - 14} ${l[1] - 8}l24 -6q8 6 8 24l-12 10l-20 -6ZM${l[0] - 6} ${l[1] - 12}q-2 -16 8 -16q10 2 8 14`" />
            <rect v-for="(r, i) in dashes" :key="'r' + i" :x="r[0]" :y="r[1]" :width="r[2]" height="12" rx="6" />
            <g transform="translate(450 42)">
              <path v-for="p in petals" :key="p" :transform="`rotate(${p})`" d="M8 0Q30 -18 70 0Q30 18 8 0M25 0H50" />
              <circle r="9" />
            </g>
            <circle cx="376" cy="208" r="41" />
            <path d="M376 190l6 10l12 2l-8 10l2 12l-12 -4l-12 4l2 -12l-8 -10l12 -2Z" />
            <rect x="668" y="124" width="114" height="64" rx="18" transform="rotate(4 725 156)" />
            <path d="M680 188L762 194M745 124q10 -8 18 2" />
            <text x="682" y="170" font-size="46">1:13</text>
            <text x="1228" y="508" font-size="52">24</text>
            <text x="122" y="980" font-size="30">a</text>
            <text x="262" y="965" font-size="30">j</text>
            <text x="350" y="974" font-size="30">m</text>
            <text x="284" y="830" font-size="30">t</text>
            <path v-for="(d, i) in doodles" :key="'p' + i" :d="d" />
          </g>
        </pattern>
      </defs>
      <rect width="100%" height="100%" fill="url(#doodles)" />
    </svg>

    <div class="topline"></div>
    <div class="clipped"></div>

    <div class="thread">
      <template v-for="(group, g) in groups" :key="g">
        <div v-if="group.divider" class="unread"><span>{{ group.divider }}</span></div>
        <section v-else class="group" :class="group.side">
          <div v-for="(m, i) in group.messages" :key="i" class="row">
            <button v-if="m.hovered" class="react" type="button" aria-label="React">
              <svg viewBox="0 0 18 18" width="18" height="18">
                <circle cx="9" cy="9" r="7.7" fill="none" stroke="currentColor" stroke-width="1.6" />
                <circle cx="6.3" cy="6.9" r="1.2" fill="currentColor" />
                <circle cx="11.7" cy="6.9" r="1.2" fill="currentColor" />
                <path d="M4.5 9.8H13.5Q12.6 13.8 9 13.8Q5.4 13.8 4.5 9.8ZM6.4 11.1Q9 13.2 11.6 11.1Z" fill="currentColor" fill-rule="evenodd" />
              </svg>
            </button>
            <article class="bubble">
              <svg v-if="i === 0" class="tail" viewBox="0 0 8 12" width="8" height="12" aria-hidden="true">
                <path d="M0 0H6.5Q8 0 7 1.4L0 10.5Z" fill="currentColor" />
              </svg>
              <blockquote v-if="m.quote" class="quote">
                <p class="sender">
                  <span>{{ m.quote.phone }}</span>
                  <svg v-if="m.quote.name" class="mosaic" width="86" height="18" aria-hidden="true">
                    <rect v-for="(t, k) in mosaicPhoneB" :key="k" :x="t[0]" :y="t[1]" :width="t[2]" :height="t[3]" :fill="t[4]" />
                  </svg>
                  <svg v-else class="mosaic" width="140" height="18" aria-hidden="true">
                    <rect v-for="(t, k) in [...mosaicPhone, ...mosaicName]" :key="k" :x="t[0]" :y="t[1]" :width="t[2]" :height="t[3]" :fill="t[4]" />
                  </svg>
                  <span v-if="m.quote.name" class="name">{{ m.quote.name }}</span>
                </p>
                <p class="quoted">{{ m.quote.text }}</p>
              </blockquote>
              <div class="line">
                <p class="text">{{ m.text }}</p>
                <time>{{ m.time }}</time>
                <svg v-if="group.side === 'out'" class="ticks" viewBox="0 0 17 11" width="17" height="11" role="img" aria-label="Read">
                  <path d="M.8 6.2L4.2 9.6L11.2 1M5.6 7.8L7.6 9.6L15.8 1" fill="none" stroke="currentColor" stroke-width="1.7" />
                </svg>
              </div>
              <button v-if="m.reaction" class="reaction" type="button" aria-label="Thumbs up">
                <svg viewBox="0 0 18 18" width="18" height="18">
                  <path d="M1 8.6Q3.5 8 5.3 7.8Q7.6 5.4 7.4 1.7Q7.6 .3 9 .5Q11.4 1.6 10.4 6.8H15.8Q17.3 7 17.2 8.4Q17.1 9.4 16.4 9.7Q17.6 10.4 17.2 11.5Q17 12.3 16.3 12.6Q17 13.4 16.6 14.2Q16.2 15 15.4 15.1Q15.8 16.8 13.8 17H8.8Q6.6 17 5 15.6H1Q0 12 1 8.6Z" fill="#fcc42f" />
                  <path d="M10 9.5Q12 9.9 16.4 9.7M10.6 12.6H16.3M10.8 15.1H15.4M5.3 7.8Q4.2 11 5 15.6" fill="none" stroke="#d98a16" stroke-width=".8" />
                </svg>
              </button>
            </article>
          </div>
        </section>
      </template>
    </div>

    <div class="watermark">
      <svg viewBox="0 0 42 34" width="42" height="34" aria-hidden="true">
        <path d="M15 0C6.5 0 0 5.6 0 12.6C0 16.6 2.1 20.1 5.5 22.4L4.4 26.8L9.5 24.2Q12 25 15.6 25C14.2 17 20.5 11 29.4 11C28 4.6 22 0 15 0Z" fill="currentColor" />
        <path d="M29 12C21.8 12 16.4 16.8 16.4 22.5C16.4 28.3 22 32.8 29 32.8Q31.8 32.8 34 32L38.2 34L37.2 30.5C40 28.5 41.8 25.7 41.8 22.5C41.8 16.8 36 12 29 12Z" fill="currentColor" />
        <g fill="#171918">
          <circle cx="10" cy="8.6" r="1.9" /><circle cx="20" cy="8.6" r="1.9" />
          <circle cx="24.8" cy="19" r="1.5" /><circle cx="33.2" cy="19" r="1.5" />
        </g>
      </svg>
      <span>公众号<span class="dot"> · </span>好学的Jack</span>
    </div>
  </main>
</template>

<style>
body {
  margin: 0;
  background: #161817;
}
</style>

<style scoped>
.chat {
  position: relative;
  min-height: 100vh;
  box-sizing: border-box;
  overflow: hidden;
  background: #161817;
  color: #f2f4f3;
  font-family: Inter, "Noto Sans CJK SC", sans-serif;
}
.wallpaper {
  position: absolute;
  inset: 0;
  width: 100%;
  height: 100%;
}
.ink {
  fill: none;
  stroke: #202322;
  stroke-width: 4;
  stroke-linejoin: round;
  stroke-linecap: round;
}
.ink text {
  font-family: Inter, sans-serif;
  font-weight: 600;
  stroke-width: 3;
}
.topline {
  position: relative;
  height: 3px;
  background: #161817;
}
.clipped {
  position: relative;
  width: 436px;
  max-width: 80%;
  height: 4px;
  margin-left: 16px;
  border-radius: 0 0 6px 6px;
  background: #232627;
}
.thread {
  position: relative;
  display: flex;
  flex-direction: column;
  gap: 13px;
  padding-top: 13px;
}
.group {
  display: flex;
  flex-direction: column;
  gap: 3px;
  padding: 0 24px 0 16px;
}
.row {
  display: flex;
  align-items: center;
  gap: 11px;
}
.out .row {
  justify-content: flex-end;
}
.bubble {
  position: relative;
  border-radius: 7px;
  background: #212526;
  color: #f2f4f3;
  box-shadow: 0 1px 1px rgba(0, 0, 0, 0.2);
}
.out .bubble {
  background: #164d38;
}
.in .row:first-child .bubble {
  border-top-left-radius: 0;
}
.out .row:first-child .bubble {
  border-top-right-radius: 0;
}
.tail {
  position: absolute;
  top: 0;
}
.out .tail {
  left: 100%;
  color: #164d38;
}
.in .tail {
  right: 100%;
  color: #212526;
  transform: scaleX(-1);
}
.line {
  display: flex;
  height: 34px;
  padding: 0 7px 0 9px;
}
.text {
  margin: 0;
  font-size: 14px;
  font-weight: 500;
  line-height: 33px;
  white-space: nowrap;
}
time {
  margin: 16px 0 0 6px;
  color: #9b9d9d;
  font-size: 12px;
  font-weight: 500;
  line-height: 16px;
}
.out time {
  color: #9cb3a9;
}
.ticks {
  margin: 18px 0 0 3px;
  color: #53bdeb;
}
.quote {
  position: relative;
  height: 48px;
  margin: 0 3px;
  padding: 8px 12px 0;
  overflow: hidden;
  border-radius: 7px;
  background: #103c2b;
}
.quote::before {
  content: "";
  position: absolute;
  inset: 0 auto 0 0;
  width: 4px;
  background: #06cf9c;
}
.bubble:has(.quote) {
  padding-top: 3px;
}
.sender {
  display: flex;
  align-items: center;
  height: 18px;
  margin: 0 0 4px;
  color: #06cf9c;
  font-size: 13px;
  font-weight: 600;
}
.mosaic {
  margin-left: 4px;
  border-radius: 6px 0 0 6px;
}
.name {
  margin-left: 9px;
  color: #56796a;
  font-weight: 400;
}
.quoted {
  margin: 0;
  color: #92a89e;
  font-size: 13px;
  font-weight: 500;
  line-height: 18px;
  white-space: nowrap;
}
.react {
  display: flex;
  padding: 0;
  border: 0;
  background: none;
  color: #a9abaa;
}
.unread {
  display: flex;
  justify-content: center;
  padding: 5px 0 6px;
  background: rgba(0, 0, 0, 0.25);
}
.unread span {
  padding: 0 12px;
  margin-right: 15px;
  border-radius: 17px;
  background: #1d2020;
  font-size: 12px;
  font-weight: 600;
  line-height: 33px;
}
.reaction {
  position: absolute;
  left: 9px;
  top: 31px;
  display: flex;
  justify-content: center;
  align-items: center;
  width: 30px;
  height: 26px;
  padding: 0;
  border: 1px solid #161817;
  border-radius: 13px;
  background: #212526;
}
.watermark {
  position: absolute;
  right: 33px;
  bottom: 20px;
  display: flex;
  align-items: center;
  gap: 8px;
  color: #858686;
  font-family: "Noto Sans CJK SC", sans-serif;
  font-size: 31px;
  font-weight: 400;
  line-height: 44px;
  white-space: nowrap;
}
.watermark svg {
  color: #a3a4a4;
}
.dot {
  padding: 0 3px;
  font-family: Inter, sans-serif;
  font-size: 28px;
}
</style>
